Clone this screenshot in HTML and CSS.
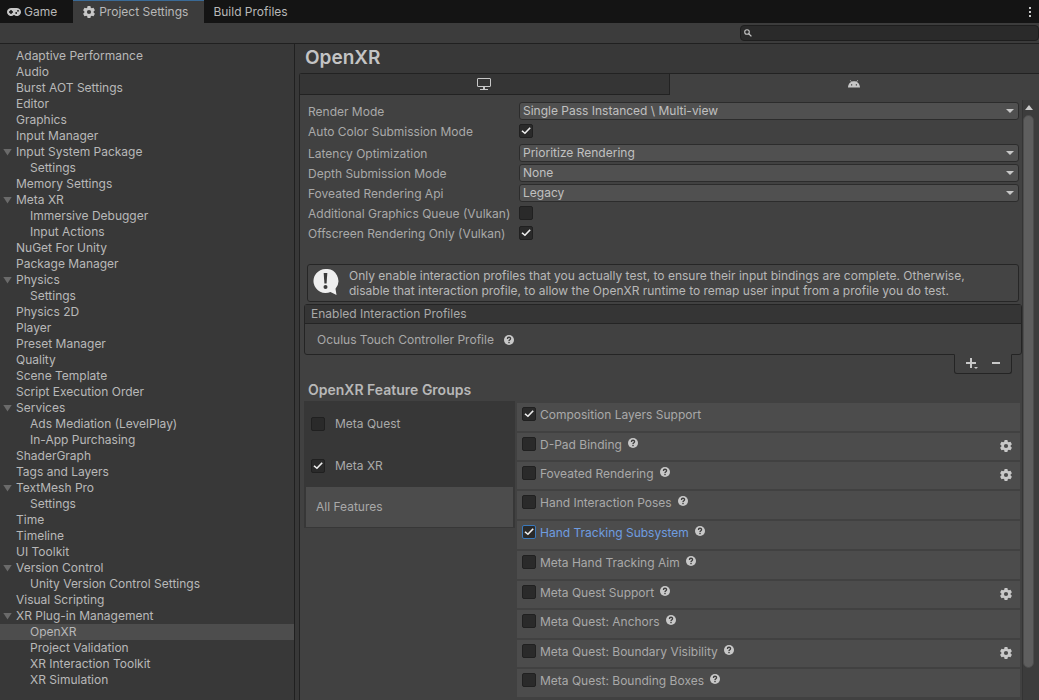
FILE: index.html
```
<!DOCTYPE html>
<html lang="en">
<head>
  <meta charset="UTF-8">
  <meta name="viewport" content="width=device-width, initial-scale=1.0">
  <title>Project Settings</title>
  <link rel="stylesheet" href="styles.css">
</head>
<body>

  <!-- Shared icons -->
  <svg class="sprite" aria-hidden="true">
    <symbol id="gear" viewBox="0 0 12 12">
      <path fill-rule="evenodd" d="M4.6 0h2.8l.4 1.7 1 .6 1.7-.5 1.4 2.4-1.3 1.2v1.2l1.3 1.2-1.4 2.4-1.7-.5-1 .6-.4 1.7H4.6l-.4-1.7-1-.6-1.7.5L.1 7.8l1.3-1.2V5.4L.1 4.2l1.4-2.4 1.7.5 1-.6zM6 3.9a2.1 2.1 0 1 0 0 4.2 2.1 2.1 0 0 0 0-4.2z"/>
    </symbol>
    <symbol id="help" viewBox="0 0 10 10">
      <circle cx="5" cy="5" r="5"/>
      <path d="M3.4 3.9C3.4 1.7 6.6 1.8 6.6 3.7 6.6 4.7 5 4.7 5 6" fill="none" stroke="#3c3c3c" stroke-width="1.3"/>
      <rect x="4.3" y="6.8" width="1.4" height="1.4" fill="#3c3c3c"/>
    </symbol>
  </svg>

  <!-- Window tabs -->
  <header class="tabs">
    <button class="tab tab-game" type="button">
      <svg width="14" height="8" viewBox="0 0 14 8" aria-hidden="true">
        <path fill-rule="evenodd" d="M4 0a4 4 0 1 0 2.7 7h.6A4 4 0 1 0 10 0zM3.3 2h1.4v1.3H6v1.4H4.7V6H3.3V4.7H2V3.3h1.3zM11 1.9a.9.9 0 1 1 0 1.8.9.9 0 0 1 0-1.8zM9.2 4.1a.9.9 0 1 1 0 1.8.9.9 0 0 1 0-1.8z"/>
      </svg>
      Game
    </button>
    <button class="tab active" type="button">
      <svg width="12" height="12" aria-hidden="true"><use href="#gear"/></svg>
      Project Settings
    </button>
    <button class="tab" type="button">Build Profiles</button>
    <button class="tab-menu" type="button" aria-label="Window menu">
      <svg width="2" height="10" viewBox="0 0 2 10" aria-hidden="true"><path d="M0 0h2v2H0zM0 4h2v2H0zM0 8h2v2H0z"/></svg>
    </button>
  </header>

  <!-- Search bar -->
  <div class="toolbar">
    <label class="search">
      <svg width="8" height="8" viewBox="0 0 8 8" aria-hidden="true">
        <circle cx="3" cy="3" r="2.3" fill="none" stroke="#c4c4c4" stroke-width="1.1"/>
        <path d="M4.7 4.7L7.4 7.4" stroke="#c4c4c4" stroke-width="1.3"/>
      </svg>
      <input type="text" aria-label="Search settings">
    </label>
  </div>

  <div class="window">
    <nav class="sidebar">
      <ul>
        <li><a href="#">Adaptive Performance</a></li>
        <li><a href="#">Audio</a></li>
        <li><a href="#">Burst AOT Settings</a></li>
        <li><a href="#">Editor</a></li>
        <li><a href="#">Graphics</a></li>
        <li><a href="#">Input Manager</a></li>
        <li><a class="group" href="#">Input System Package</a>
          <ul>
            <li><a href="#">Settings</a></li>
          </ul>
        </li>
        <li><a href="#">Memory Settings</a></li>
        <li><a class="group" href="#">Meta XR</a>
          <ul>
            <li><a href="#">Immersive Debugger</a></li>
            <li><a href="#">Input Actions</a></li>
          </ul>
        </li>
        <li><a href="#">NuGet For Unity</a></li>
        <li><a href="#">Package Manager</a></li>
        <li><a class="group" href="#">Physics</a>
          <ul>
            <li><a href="#">Settings</a></li>
          </ul>
        </li>
        <li><a href="#">Physics 2D</a></li>
        <li><a href="#">Player</a></li>
        <li><a href="#">Preset Manager</a></li>
        <li><a href="#">Quality</a></li>
        <li><a href="#">Scene Template</a></li>
        <li><a href="#">Script Execution Order</a></li>
        <li><a class="group" href="#">Services</a>
          <ul>
            <li><a href="#">Ads Mediation (LevelPlay)</a></li>
            <li><a href="#">In-App Purchasing</a></li>
          </ul>
        </li>
        <li><a href="#">ShaderGraph</a></li>
        <li><a href="#">Tags and Layers</a></li>
        <li><a class="group" href="#">TextMesh Pro</a>
          <ul>
            <li><a href="#">Settings</a></li>
          </ul>
        </li>
        <li><a href="#">Time</a></li>
        <li><a href="#">Timeline</a></li>
        <li><a href="#">UI Toolkit</a></li>
        <li><a class="group" href="#">Version Control</a>
          <ul>
            <li><a href="#">Unity Version Control Settings</a></li>
          </ul>
        </li>
        <li><a href="#">Visual Scripting</a></li>
        <li><a class="group" href="#">XR Plug-in Management</a>
          <ul>
            <li><a class="selected" href="#">OpenXR</a></li>
            <li><a href="#">Project Validation</a></li>
            <li><a href="#">XR Interaction Toolkit</a></li>
            <li><a href="#">XR Simulation</a></li>
          </ul>
        </li>
      </ul>
    </nav>

    <main class="main">
      <h1>OpenXR</h1>

      <div class="panel">
        <!-- Platform tabs -->
        <div class="platforms">
          <button class="platform" type="button" aria-label="Desktop">
            <svg width="14" height="12" viewBox="0 0 14 12" aria-hidden="true">
              <rect x=".5" y=".5" width="13" height="8" rx=".5" fill="none" stroke="#c8c8c8"/>
              <path d="M6 9h2v2h3v1H3v-1h3z"/>
            </svg>
          </button>
          <button class="platform active" type="button" aria-label="Android">
            <svg width="12" height="8" viewBox="0 0 12 8" aria-hidden="true">
              <path d="M2.2.2l1.3 1.7M9.8.2L8.5 1.9" stroke="#c8c8c8" stroke-width=".8"/>
              <path fill-rule="evenodd" d="M0 7.5C.2 3.7 2.6 1.3 6 1.3s5.8 2.4 6 6.200zM3 4.300v1.300h1.200V4.300zM7.800 4.300v1.300H9V4.300z"/>
            </svg>
          </button>
        </div>

        <div class="scroll-view">
          <div class="content">
            <div class="fields">
              <div class="field">
                <label for="renderMode">Render Mode</label>
                <div class="select"><select id="renderMode"><option>Single Pass Instanced \ Multi-view</option></select></div>
              </div>
              <div class="field">
                <label for="autoColor">Auto Color Submission Mode</label>
                <input type="checkbox" id="autoColor" checked>
              </div>
              <div class="field spaced">
                <label for="latency">Latency Optimization</label>
                <div class="select"><select id="latency"><option>Prioritize Rendering</option></select></div>
              </div>
              <div class="field">
                <label for="depth">Depth Submission Mode</label>
                <div class="select"><select id="depth"><option>None</option></select></div>
              </div>
              <div class="field">
                <label for="foveated">Foveated Rendering Api</label>
                <div class="select"><select id="foveated"><option>Legacy</option></select></div>
              </div>
              <div class="field">
                <label for="queue">Additional Graphics Queue (Vulkan)</label>
                <input type="checkbox" id="queue">
              </div>
              <div class="field">
                <label for="offscreen">Offscreen Rendering Only (Vulkan)</label>
                <input type="checkbox" id="offscreen" checked>
              </div>
            </div>

            <div class="help-box">
              <svg width="26" height="28" viewBox="0 0 26 28" aria-hidden="true">
                <path fill="#eee" d="M12.5 0a12 12 0 1 0 5 22.900L23.500 26l-1-6.300A12 12 0 0 0 12.500 0z"/>
                <path fill="#3a3a3a" d="M10.700 4h3.600l-.7 10.500h-2.200z"/>
                <circle cx="12.500" cy="18" r="2" fill="#3a3a3a"/>
              </svg>
              <p>Only enable interaction profiles that you actually test, to ensure their input bindings are complete. Otherwise, disable that interaction profile, to allow the OpenXR runtime to remap user input from a profile you do test.</p>
            </div>

            <!-- Interaction profiles list -->
            <section class="profiles">
              <h3>Enabled Interaction Profiles</h3>
              <div class="profile">
                Oculus Touch Controller Profile
                <svg width="10" height="10" aria-hidden="true"><use href="#help"/></svg>
              </div>
            </section>
            <div class="profile-buttons">
              <button type="button" aria-label="Add profile">
                <svg width="13" height="12" viewBox="0 0 13 12" aria-hidden="true"><path d="M4 0h2v4h4v2H6v4H4V6H0V4h4zM8 9h4l-2 2z"/></svg>
              </button>
              <button type="button" aria-label="Remove profile">
                <svg width="8" height="12" viewBox="0 0 8 12" aria-hidden="true"><path d="M0 4h8v2H0z"/></svg>
              </button>
            </div>

            <h2>OpenXR Feature Groups</h2>
            <div class="features">
              <div class="groups">
                <div class="group-item"><input type="checkbox" id="metaQuest"><label for="metaQuest">Meta Quest</label></div>
                <div class="group-item"><input type="checkbox" id="metaXr" checked><label for="metaXr">Meta XR</label></div>
                <button class="group-item all" type="button">All Features</button>
              </div>

              <div class="feature-list">
                <div class="feature">
                  <input type="checkbox" id="f1" checked><label for="f1">Composition Layers Support</label>
                </div>
                <div class="feature has-settings">
                  <input type="checkbox" id="f2"><label for="f2">D-Pad Binding</label>
                  <svg class="help" width="10" height="10" aria-hidden="true"><use href="#help"/></svg>
                  <button class="gear" type="button" aria-label="Settings"><svg width="12" height="12" aria-hidden="true"><use href="#gear"/></svg></button>
                </div>
                <div class="feature has-settings">
                  <input type="checkbox" id="f3"><label for="f3">Foveated Rendering</label>
                  <svg class="help" width="10" height="10" aria-hidden="true"><use href="#help"/></svg>
                  <button class="gear" type="button" aria-label="Settings"><svg width="12" height="12" aria-hidden="true"><use href="#gear"/></svg></button>
                </div>
                <div class="feature">
                  <input type="checkbox" id="f4"><label for="f4">Hand Interaction Poses</label>
                  <svg class="help" width="10" height="10" aria-hidden="true"><use href="#help"/></svg>
                </div>
                <div class="feature focused">
                  <input type="checkbox" id="f5" checked><label for="f5">Hand Tracking Subsystem</label>
                  <svg class="help" width="10" height="10" aria-hidden="true"><use href="#help"/></svg>
                </div>
                <div class="feature">
                  <input type="checkbox" id="f6"><label for="f6">Meta Hand Tracking Aim</label>
                  <svg class="help" width="10" height="10" aria-hidden="true"><use href="#help"/></svg>
                </div>
                <div class="feature has-settings">
                  <input type="checkbox" id="f7"><label for="f7">Meta Quest Support</label>
                  <svg class="help" width="10" height="10" aria-hidden="true"><use href="#help"/></svg>
                  <button class="gear" type="button" aria-label="Settings"><svg width="12" height="12" aria-hidden="true"><use href="#gear"/></svg></button>
                </div>
                <div class="feature">
                  <input type="checkbox" id="f8"><label for="f8">Meta Quest: Anchors</label>
                  <svg class="help" width="10" height="10" aria-hidden="true"><use href="#help"/></svg>
                </div>
                <div class="feature has-settings">
                  <input type="checkbox" id="f9"><label for="f9">Meta Quest: Boundary Visibility</label>
                  <svg class="help" width="10" height="10" aria-hidden="true"><use href="#help"/></svg>
                  <button class="gear" type="button" aria-label="Settings"><svg width="12" height="12" aria-hidden="true"><use href="#gear"/></svg></button>
                </div>
                <div class="feature">
                  <input type="checkbox" id="f10"><label for="f10">Meta Quest: Bounding Boxes</label>
                  <svg class="help" width="10" height="10" aria-hidden="true"><use href="#help"/></svg>
                </div>
              </div>
            </div>
          </div>

          <!-- Scrollbar -->
          <div class="scrollbar">
            <svg width="8" height="5" viewBox="0 0 8 5" aria-hidden="true"><path d="M4 0l4 5H0z"/></svg>
            <div class="thumb"></div>
          </div>
        </div>
      </div>
    </main>
  </div>

</body>
</html>
```
FILE: styles.css
```
/* General */
* {
  box-sizing: border-box;
}

body {
  display: flex;
  flex-direction: column;
  height: 100vh;
  margin: 0;
  overflow: hidden;
  background-color: #383838;
  color: #b8b8b8;
  font-family: Inter, "Liberation Sans", sans-serif;
  font-size: 12px;
  line-height: 16px;
}

h1, h2, h3, p, ul {
  margin: 0;
  padding: 0;
}

button, input, select {
  margin: 0;
  padding: 0;
  border: none;
  background: none;
  color: inherit;
  font: inherit;
}

svg {
  flex: none;
  fill: #c8c8c8;
}

.sprite {
  position: absolute;
  width: 0;
  height: 0;
}

/* Window tabs */
.tabs {
  display: flex;
  flex: none;
  height: 23px;
  background-color: #141414;
}

.tab {
  display: flex;
  align-items: center;
  gap: 4px;
  padding: 0 9px;
}

.tab-game {
  gap: 3px;
  padding: 0 16px 0 7px;
}

.tab.active {
  padding: 0 16px 0 10px;
  border-top: 1px solid #3a6a96;
  background-color: #3c3c3c;
}

.tab-menu {
  display: flex;
  align-items: center;
  margin-left: auto;
  padding: 0 8px;
}

/* Toolbar */
.toolbar {
  display: flex;
  flex: none;
  justify-content: flex-end;
  align-items: center;
  height: 21px;
  border-bottom: 1px solid #202020;
  background-color: #3c3c3c;
}

.search {
  display: flex;
  align-items: center;
  gap: 6px;
  width: 299px;
  height: 16px;
  padding-left: 3px;
  border: 1px solid #1e1e1e;
  border-radius: 4px;
  background-color: #2a2a2a;
}

.search input {
  flex: 1;
  height: 14px;
  outline: none;
}

.window {
  display: flex;
  flex: 1;
  min-height: 0;
}

/* Settings tree */
.sidebar {
  flex: none;
  width: 295px;
  padding-top: 4px;
  border-right: 1px solid #202020;
  overflow: hidden;
}

.sidebar ul {
  list-style: none;
}

.sidebar a {
  display: flex;
  align-items: center;
  height: 16px;
  padding-left: 16px;
  color: inherit;
  text-decoration: none;
}

.sidebar ul ul a {
  padding-left: 30px;
}

.sidebar .group {
  gap: 4px;
  padding-left: 3px;
}

.sidebar .group::before {
  content: "";
  width: 9px;
  height: 7px;
  background-color: #6a6a6a;
  clip-path: polygon(0 0, 100% 0, 50% 100%);
}

.sidebar .selected {
  background-color: #4d4d4d;
}

/* Main area */
.main {
  display: flex;
  flex: 1;
  flex-direction: column;
  min-width: 0;
}

h1 {
  flex: none;
  height: 29px;
  padding-left: 10px;
  color: #c4c4c4;
  font-size: 19px;
  font-weight: 600;
  line-height: 28px;
}

.panel {
  display: flex;
  flex: 1;
  flex-direction: column;
  min-height: 0;
  margin-left: 4px;
  border-top: 1px solid #222;
  border-left: 1px solid #222;
  border-top-left-radius: 3px;
  background-color: #414141;
}

.platforms {
  display: flex;
  flex: none;
  height: 21px;
}

.platform {
  display: flex;
  flex: 1;
  justify-content: center;
  align-items: center;
  border-right: 1px solid #222;
  border-bottom: 1px solid #222;
  background-color: #353535;
}

.platform.active {
  border-color: transparent;
  background-color: transparent;
}

.scroll-view {
  display: flex;
  flex: 1;
  min-height: 0;
}

.content {
  flex: 1;
  min-width: 0;
  padding: 6px 0 0 4px;
  overflow: hidden;
  color: #a9a9a9;
}

/* Fields */
.fields {
  padding: 0 3px 0 4px;
}

.field {
  display: flex;
  align-items: center;
  height: 20px;
}

.field.spaced {
  margin-top: 2px;
}

.field > label {
  flex: none;
  width: 211px;
  line-height: 18px;
  padding-top: 1px;
}

.select {
  position: relative;
  flex: 1;
}

.select select {
  display: block;
  width: 100%;
  height: 18px;
  padding: 0 20px 0 3px;
  border: 1px solid #2c2c2c;
  border-radius: 3px;
  background-color: #505050;
  color: #c0c0c0;
  line-height: 16px;
  appearance: none;
}

.select::after {
  content: "";
  position: absolute;
  top: 7px;
  right: 5px;
  width: 8px;
  height: 4px;
  background-color: #c8c8c8;
  clip-path: polygon(0 0, 100% 0, 50% 100%);
  pointer-events: none;
}

input[type="checkbox"] {
  display: grid;
  flex: none;
  place-items: center;
  width: 14px;
  height: 14px;
  border: 1px solid #202020;
  border-radius: 2px;
  background-color: #2a2a2a;
  appearance: none;
}

input[type="checkbox"]:checked::before {
  content: "";
  width: 10px;
  height: 8px;
  background-color: #eee;
  clip-path: polygon(4% 54%, 16% 40%, 38% 66%, 86% 4%, 98% 16%, 40% 92%);
}

/* Help box */
.help-box {
  display: flex;
  align-items: center;
  gap: 10px;
  height: 38px;
  margin: 21px 3px 2px;
  padding: 0 40px 0 5px;
  border: 1px solid #262626;
  border-radius: 3px;
  background-color: #444;
  color: #b8b8b8;
  line-height: 15px;
}

/* Interaction profiles */
.profiles {
  border: 1px solid #242424;
  border-radius: 3px;
}

.profiles h3 {
  height: 19px;
  padding-left: 6px;
  border-bottom: 1px solid #242424;
  background-color: #353535;
  font-size: 12px;
  font-weight: 400;
  line-height: 18px;
}

.profile {
  display: flex;
  align-items: center;
  gap: 10px;
  height: 30px;
  padding: 2px 12px 0;
}

.profile-buttons {
  display: flex;
  justify-content: center;
  align-items: center;
  gap: 13px;
  width: 58px;
  height: 20px;
  margin: -1px 10px 0 auto;
  border: 1px solid #242424;
  border-top-color: #414141;
  border-radius: 0 0 3px 3px;
}

.profile-buttons button {
  display: flex;
}

/* Feature groups */
h2 {
  padding: 8px 4px 3px;
  color: #b8b8b8;
  font-size: 14px;
  font-weight: 600;
  line-height: 16px;
}

.features {
  display: flex;
  align-items: flex-start;
  gap: 2px;
}

.groups {
  flex: none;
  width: 211px;
  padding: 2px 2px 1px;
  background-color: #373737;
}

.group-item {
  display: flex;
  align-items: center;
  gap: 10px;
  width: 100%;
  height: 42px;
  padding-left: 5px;
}

.group-item.all {
  height: 40px;
  padding-left: 10px;
  background-color: #4c4c4c;
}

.feature-list {
  display: flex;
  flex: 1;
  flex-direction: column;
  gap: 2px;
  min-width: 0;
  margin: 2px 2px 0 0;
}

.feature {
  display: flex;
  flex: none;
  align-items: flex-start;
  height: 28px;
  padding: 3px 8px 0 5px;
  background-color: #4c4c4c;
}

.feature.has-settings {
  height: 27px;
}

.feature input {
  margin-top: 1px;
}

.feature label {
  margin: 0 6px 0 4px;
  line-height: 17px;
}

.feature .help {
  margin-top: 2px;
}

.feature .gear {
  display: flex;
  margin: 4px 0 0 auto;
}

.feature.focused label {
  color: #6f9de0;
}

.feature.focused input {
  border-color: #3a79bb;
}

/* Scrollbar */
.scrollbar {
  display: flex;
  flex: none;
  flex-direction: column;
  align-items: center;
  gap: 5px;
  width: 17px;
  margin-top: 5px;
  padding: 5px 5px 32px 0;
  border-left: 1px solid #343434;
  background-color: #3c3c3c;
}

.thumb {
  flex: 1;
  width: 11px;
  border: 1px solid #4c4c4c;
  border-radius: 6px;
  background-color: #5e5e5e;
}
```
